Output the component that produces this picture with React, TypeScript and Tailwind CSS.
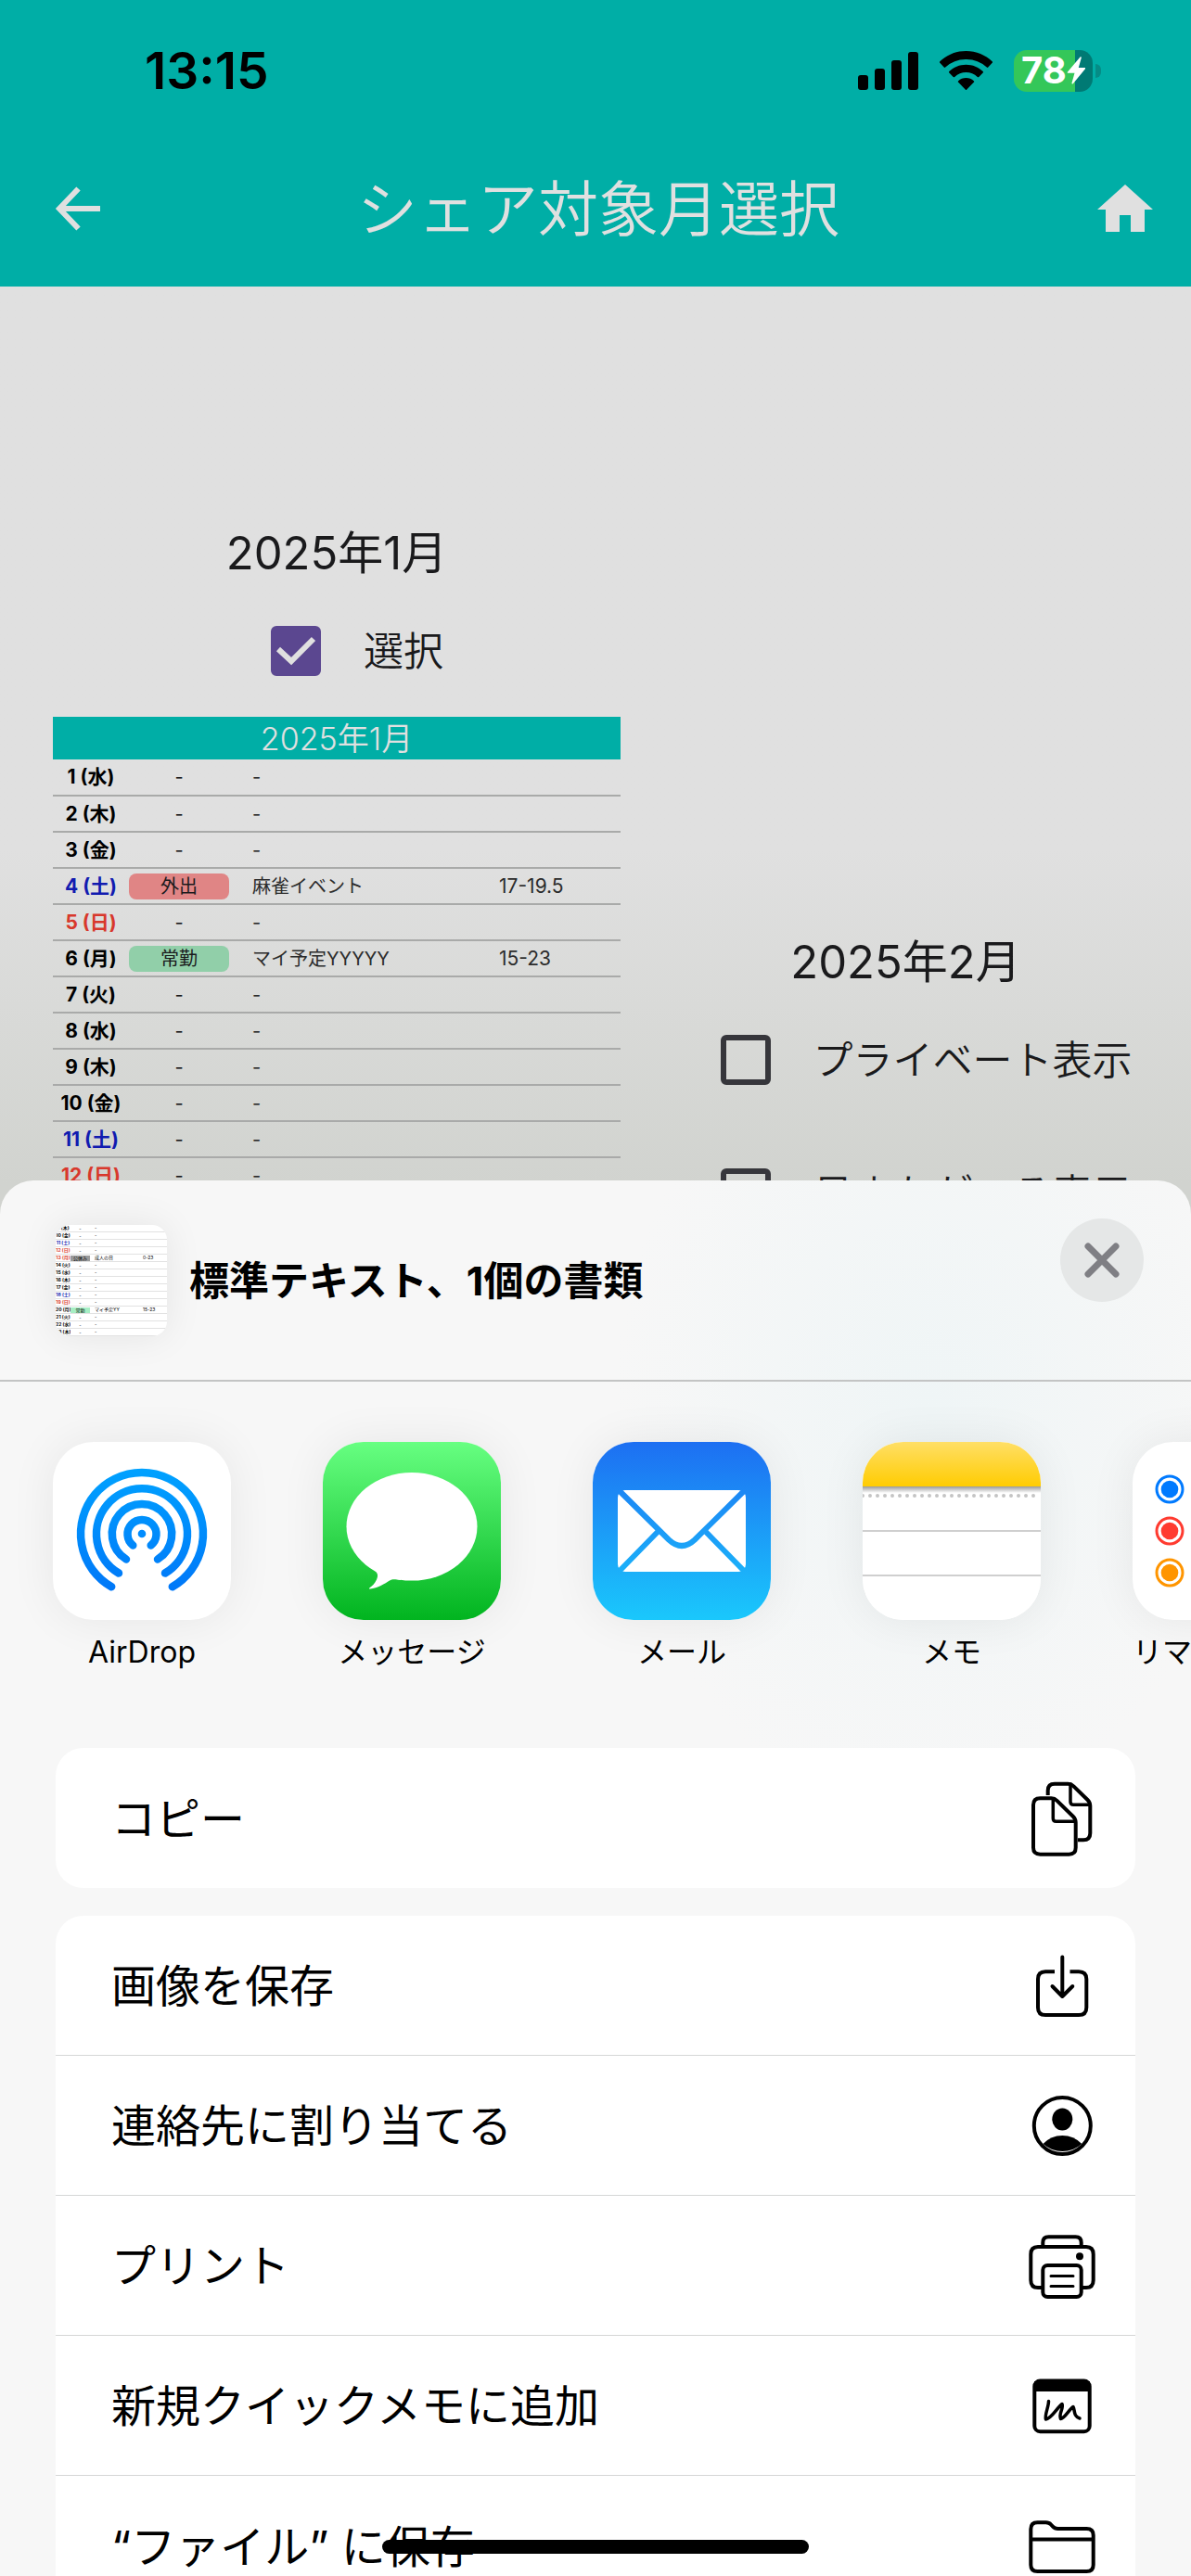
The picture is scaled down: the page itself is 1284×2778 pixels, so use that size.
import type { ReactNode } from "react";

type Day = {
  label: string;
  color?: string;
  tag?: string;
  tagColor?: string;
  text?: string;
  time?: string;
};

const BLUE = "text-[#111bb0]";
const RED = "text-[#d8382c]";

const days: Day[] = [
  { label: "1 (水)" },
  { label: "2 (木)" },
  { label: "3 (金)" },
  { label: "4 (土)", color: BLUE, tag: "外出", tagColor: "bg-[#e08585]", text: "麻雀イベント", time: "17-19.5" },
  { label: "5 (日)", color: RED },
  { label: "6 (月)", tag: "常勤", tagColor: "bg-[#91cfa9]", text: "マイ予定YYYYY", time: "15-23" },
  { label: "7 (火)" },
  { label: "8 (水)" },
  { label: "9 (木)" },
  { label: "10 (金)" },
  { label: "11 (土)", color: BLUE },
  { label: "12 (日)", color: RED },
];

const previewDays: Day[] = [
  { label: "9 (木)" },
  { label: "10 (金)" },
  { label: "11 (土)", color: BLUE },
  { label: "12 (日)", color: RED },
  { label: "13 (月)", color: RED, tag: "公休み", tagColor: "bg-[#9a9a9a]", text: "成人の日", time: "0-23" },
  { label: "14 (火)" },
  { label: "15 (水)" },
  { label: "16 (木)" },
  { label: "17 (金)" },
  { label: "18 (土)", color: BLUE },
  { label: "19 (日)", color: RED },
  { label: "20 (月)", tag: "常勤", tagColor: "bg-[#a6eec4]", text: "マイ予定YY", time: "15-23" },
  { label: "21 (火)" },
  { label: "22 (水)" },
  { label: "23 (木)" },
];

function StatusBar() {
  return (
    <div className="flex h-[152px] items-center justify-between pr-[97px] pl-[156px]">
      <time className="text-[55px] leading-none font-semibold">13:15</time>
      <div className="flex items-center">
        <svg className="h-[42px] w-[65px]" viewBox="0 0 65 42" aria-label="電波">
          <rect x="0" y="26" width="11" height="16" rx="3" />
          <rect x="18" y="19" width="11" height="23" rx="3" />
          <rect x="36" y="10" width="11" height="32" rx="3" />
          <rect x="54" y="1" width="11" height="41" rx="3" />
        </svg>
        <svg className="ml-[23px] h-[42px] w-[57px]" viewBox="0 0 57 42" aria-label="Wi-Fi">
          <path d="M28.500 0C39.500 0 49.500 4.300 56.700 11.300a1 1 0 0 1 0 1.500L52.300 17.600a1 1 0 0 1-1.500 0A32 32 0 0 0 28.500 9 32 32 0 0 0 6.200 17.600a1 1 0 0 1-1.500 0L.300 12.800a1 1 0 0 1 0-1.500C7.500 4.300 17.500 0 28.500 0Z" />
          <path d="M28.500 14.700c7 0 13.500 2.800 18.200 7.300a1 1 0 0 1 0 1.500l-4.400 4.400a1 1 0 0 1-1.500 0 18 18 0 0 0-24.600 0 1 1 0 0 1-1.500 0l-4.400-4.400a1 1 0 0 1 0-1.500c4.700-4.500 11.200-7.300 18.200-7.300Z" />
          <path d="M28.500 29c3.200 0 6.100 1.200 8.300 3.200a1 1 0 0 1 0 1.500l-7.500 7.700a1 1 0 0 1-1.600 0l-7.500-7.700a1 1 0 0 1 0-1.500c2.200-2 5.100-3.200 8.300-3.200Z" />
        </svg>
        <div className="ml-[23px] flex h-[45px] w-[85px] items-center rounded-[14px] bg-linear-to-r from-[#34c759] from-78% to-[#007a74] to-78% pl-2 text-white">
          <span className="text-[40px] leading-none font-bold">78</span>
          <svg className="h-[30px] w-5 shrink-0" viewBox="0 0 20 30" fill="currentColor" aria-label="充電中">
            <path d="M14.500.500 1 16.500c-.600.700-.200 1.300.500 1.300h7L5.500 28.500c-.300 1 .700 1.400 1.300.700L20 13.200c.500-.600.200-1.300-.600-1.300h-6.600L15.800 1.200c.300-1-.700-1.400-1.300-.7Z" />
          </svg>
        </div>
        <div className="ml-[3px] h-[15px] w-[6px] rounded-r-full bg-[#058c86]" />
      </div>
    </div>
  );
}

function CheckRow({ label, checked = false }: { label: string; checked?: boolean }) {
  return (
    <label className="flex items-center gap-[46px] pl-11 text-[43px] leading-[54px] font-[350] whitespace-nowrap">
      <span className="grid size-[54px] shrink-0">
        <input
          type="checkbox"
          defaultChecked={checked}
          className="peer col-start-1 row-start-1 size-[54px] appearance-none rounded-md border-6 border-[#36363b] checked:border-[#5b4790] checked:bg-[#5b4790]"
        />
        <svg
          className="pointer-events-none invisible col-start-1 row-start-1 size-[54px] peer-checked:visible"
          viewBox="0 0 54 54"
          fill="none"
          stroke="#e0e0e0"
          strokeWidth="6"
        >
          <path d="M8 25 22 38 46 14" />
        </svg>
      </span>
      {label}
    </label>
  );
}

function MonthTable() {
  return (
    <table className="w-full table-fixed border-collapse text-xl leading-[28px]">
      <caption className="h-[46px] bg-[#00aea6] text-[34px] leading-[48px] font-[350] text-[#e0e0e0]">2025年1月</caption>
      <colgroup>
        <col className="w-[82px]" />
        <col className="w-[108px]" />
        <col className="w-[291px]" />
        <col />
      </colgroup>
      <tbody>
        {days.map((d) => (
          <tr key={d.label} className="h-[39px] border-b-2 border-[#a9aaa9]">
            <th scope="row" className={`p-0 text-center text-[21px] font-bold whitespace-nowrap ${d.color ?? "text-black"}`}>
              {d.label}
            </th>
            <td className="p-0 text-center">
              {d.tag ? <div className={`rounded-lg ${d.tagColor}`}>{d.tag}</div> : "-"}
            </td>
            <td className="py-0 pr-0 pl-[25px] text-[#2c2c2c]">{d.text ?? "-"}</td>
            <td className="p-0 text-[21px] text-[#2c2c2c]">{d.time}</td>
          </tr>
        ))}
      </tbody>
    </table>
  );
}

function Preview() {
  return (
    <div className="size-[120px] shrink-0 overflow-hidden rounded-2xl bg-white shadow-[0_0_40px_rgba(0,0,0,0.08)]">
      {previewDays.map((d) => (
        <div key={d.label} className="flex h-2 items-center border-b border-[#e2e2e2] text-[5px] leading-[7px] whitespace-nowrap">
          <span className={`w-4 overflow-hidden text-center font-bold ${d.color ?? "text-black"}`}>{d.label}</span>
          <span className={`w-[21px] text-center leading-[6px] ${d.tagColor ?? ""}`}>{d.tag ?? "-"}</span>
          <span className="w-[57px] pl-[5px]">{d.text ?? "-"}</span>
          <span>{d.time}</span>
        </div>
      ))}
    </div>
  );
}

function AppIcon({ children }: { children: ReactNode }) {
  return (
    <svg className="size-48 rounded-[44px] bg-white shadow-[0_0_50px_rgba(0,0,0,0.07)]" viewBox="0 0 192 192" aria-hidden="true">
      {children}
    </svg>
  );
}

const airDropIcon = (
  <AppIcon>
    <defs>
      <linearGradient id="air" gradientUnits="userSpaceOnUse" x1="0" y1="28" x2="0" y2="162">
        <stop stopColor="#00a2ff" />
        <stop offset="1" stopColor="#0077f8" />
      </linearGradient>
    </defs>
    <g fill="none" stroke="url(#air)" strokeWidth="8.500" strokeLinecap="round">
      <path d="M63.200 156.200A66 66 0 1 1 128.800 156.200" />
      <path d="M71 141.500A49 49 0 1 1 121 141.500" />
      <path d="M79 126.500A32.200 32.200 0 1 1 113 126.500" />
      <path d="M86.300 111.500A15.500 15.500 0 1 1 105.700 111.500" />
    </g>
    <circle cx="96" cy="99" r="4.300" fill="#008cff" />
  </AppIcon>
);

const messagesIcon = (
  <AppIcon>
    <defs>
      <linearGradient id="msg" x1="0" y1="0" x2="0" y2="1">
        <stop stopColor="#67ff81" />
        <stop offset="1" stopColor="#01b41f" />
      </linearGradient>
    </defs>
    <rect width="192" height="192" fill="url(#msg)" />
    <ellipse cx="96" cy="91.300" rx="70.500" ry="58.300" fill="#fff" />
    <path d="M52 135C60 141 60 144 58 148.500 56 153 53 155.500 50.500 157.300 49.600 158 50 158.700 51 158.500 59 157.500 67 153 72 149.500 75 147.500 78 148 84 149L90 130Z" fill="#fff" />
  </AppIcon>
);

const mailIcon = (
  <AppIcon>
    <defs>
      <linearGradient id="mail" gradientUnits="userSpaceOnUse" x1="0" y1="0" x2="0" y2="192">
        <stop stopColor="#1d6ff2" />
        <stop offset="1" stopColor="#1ac8fc" />
      </linearGradient>
    </defs>
    <rect width="192" height="192" fill="url(#mail)" />
    <rect x="27" y="52" width="138" height="88" rx="8" fill="#fff" />
    <g fill="none" stroke="url(#mail)" strokeWidth="6">
      <path d="M28 52 82 105.500Q96 118.500 110 105.500L164 52" />
      <path d="M70 97 28 140M122 97 164 140" />
    </g>
  </AppIcon>
);

const notesIcon = (
  <AppIcon>
    <defs>
      <linearGradient id="memo" x1="0" y1="0" x2="0" y2="1">
        <stop stopColor="#ffdf66" />
        <stop offset="1" stopColor="#ffcc02" />
      </linearGradient>
      <linearGradient id="memoShade" x1="0" y1="0" x2="0" y2="1">
        <stop stopColor="#9a9a9a" />
        <stop offset="1" stopColor="#fff" />
      </linearGradient>
    </defs>
    <rect width="192" height="192" fill="#fff" />
    <rect width="192" height="48" fill="url(#memo)" />
    <rect y="48" width="192" height="7" fill="url(#memoShade)" />
    <path d="M0 58H192" stroke="#c4c4c4" strokeWidth="4" strokeLinecap="round" strokeDasharray="0 8" />
    <path d="M0 96H192M0 144H192" stroke="#cfcfcf" strokeWidth="2" />
  </AppIcon>
);

const remindersIcon = (
  <AppIcon>
    {[
      { y: 51, c: "#007aff" },
      { y: 96, c: "#ff3b30" },
      { y: 141, c: "#ff9500" },
    ].map((o) => (
      <g key={o.c}>
        <circle cx="40" cy={o.y} r="14" fill="none" stroke={o.c} strokeWidth="3" />
        <circle cx="40" cy={o.y} r="9.300" fill={o.c} />
        <path d={`M70 ${o.y}H192`} stroke="#d1d1d6" strokeWidth="2" />
      </g>
    ))}
  </AppIcon>
);

const apps = [
  { name: "AirDrop", icon: airDropIcon },
  { name: "メッセージ", icon: messagesIcon },
  { name: "メール", icon: mailIcon },
  { name: "メモ", icon: notesIcon },
  { name: "リマインダー", icon: remindersIcon },
];

function Glyph({ children }: { children: ReactNode }) {
  return (
    <svg
      className="h-[100px] w-20 shrink-0"
      viewBox="0 0 80 100"
      fill="none"
      stroke="currentColor"
      strokeWidth="4"
      strokeLinecap="round"
      strokeLinejoin="round"
      aria-hidden="true"
    >
      {children}
    </svg>
  );
}

const copyGlyph = (
  <Glyph>
    <path d="M24.700 25V20Q24.700 12.800 32 12.800H46.500Q50 12.800 52.500 15.300L67.500 30Q70.300 32.800 70.300 36.500V66Q70.300 73.300 63 73.300H57" strokeLinecap="butt" />
    <path d="M49 13V32Q49 35.300 52.300 35.300H69.500" strokeWidth="3.500" />
    <path d="M16.500 28.300H28.500Q32 28.300 34.500 30.800L52 48Q54.700 50.700 54.700 54.500V81.500Q54.700 88.700 47.500 88.700H16.500Q9 88.700 9 81.500V35.500Q9 28.300 16.500 28.300Z" />
    <path d="M30.300 29V50Q30.300 53.300 33.600 53.300H54" strokeWidth="3.500" />
  </Glyph>
);

const saveGlyph = (
  <Glyph>
    <path d="M32 35.300H22Q14 35.300 14 43.300V74Q14 82 22 82H58Q66.300 82 66.300 74V43.300Q66.300 35.300 58 35.300H48.500" strokeLinecap="butt" />
    <path d="M40.300 19.500V62M29.500 51 40.300 62 51.300 51" />
  </Glyph>
);

const personGlyph = (
  <Glyph>
    <circle cx="40.300" cy="50.500" r="30.500" />
    <g fill="currentColor" stroke="none">
      <ellipse cx="40.300" cy="43.500" rx="11" ry="12" />
      <path d="M19.500 70Q28 61 40.300 61T61.300 70A31 31 0 0 1 19.500 70Z" />
    </g>
  </Glyph>
);

const printGlyph = (
  <Glyph>
    <path d="M19 74H14Q6.300 74 6.300 66V38Q6.300 30 14 30H66Q73.700 30 73.700 38V66Q73.700 74 66 74H61" />
    <path d="M19.300 30V25.500Q19.300 19.300 25.500 19.300H54.500Q60.700 19.300 60.700 25.500V30" />
    <rect x="19.300" y="50" width="41.400" height="34" rx="5" />
    <path d="M28 61.500H52M28 72.500H52" strokeWidth="3" />
    <circle cx="59" cy="40.300" r="4" fill="currentColor" stroke="none" />
  </Glyph>
);

const noteGlyph = (
  <Glyph>
    <rect x="10.300" y="23.600" width="59.400" height="54.600" rx="6" />
    <path d="M10 24H70V35H10Z" fill="currentColor" stroke="none" />
    <path d="M25.500 45.500C25.500 52 21 60 22.500 65 29 64 35 52 40 48.500 42 53 36 59 38.500 64.500 43.500 63.500 47 55 52 51.500 54 55 52 62 59 64" strokeWidth="3.500" />
  </Glyph>
);

const folderGlyph = (
  <Glyph>
    <path d="M13.500 24.300H22.500Q26 24.300 28 26.500L30 28.700Q32 31 35.500 31H66.500Q73.700 31 73.700 38V70Q73.700 77 66.500 77H13.500Q6.300 77 6.300 70V31.500Q6.300 24.300 13.500 24.300ZM6.300 42.500H73.700" />
  </Glyph>
);

const actions = [
  { label: "画像を保存", icon: saveGlyph },
  { label: "連絡先に割り当てる", icon: personGlyph },
  { label: "プリント", icon: printGlyph },
  { label: "新規クイックメモに追加", icon: noteGlyph },
  { label: "“ファイル” に保存", icon: folderGlyph },
];

function ActionButton({ label, icon }: { label: string; icon: ReactNode }) {
  return (
    <button type="button" className="flex h-[151px] w-full items-center justify-between pr-[39px] pl-[60px] text-left text-5xl">
      <span className="pt-0.5">{label}</span>
      {icon}
    </button>
  );
}

function ShareSheet() {
  return (
    <section aria-label="共有" className="flex-1 rounded-t-[36px] bg-[#f7f7f7] bg-[radial-gradient(ellipse_at_78%_16%,#eff5f6_0%,transparent_24%)] text-black">
      <div className="flex h-[217px] items-start border-b-2 border-[#c3c4c4] pr-[51px] pl-[60px]">
        <div className="mt-12 flex min-w-0 flex-1 items-center gap-6">
          <Preview />
          <h2 className="text-[43px] leading-none font-bold">標準テキスト、1個の書類</h2>
        </div>
        <button type="button" aria-label="閉じる" className="mt-[41px] grid size-[90px] place-items-center rounded-full bg-[#e5e7e7] text-[#7f7f84]">
          <svg className="size-11" viewBox="0 0 44 44" fill="none" stroke="currentColor" strokeWidth="7" strokeLinecap="round" aria-hidden="true">
            <path d="M7 7 37 37M37 7 7 37" />
          </svg>
        </button>
      </div>
      <ul className="flex gap-[99px] overflow-hidden pt-[65px] pb-[84px] pl-[57px]">
        {apps.map((a) => (
          <li key={a.name} className="w-48 shrink-0">
            <button type="button" className="flex w-full flex-col items-center gap-4 text-[32px] leading-[38px] whitespace-nowrap">
              {a.icon}
              <span>{a.name}</span>
            </button>
          </li>
        ))}
      </ul>
      <div className="mx-[60px] rounded-[30px] bg-white">
        <ActionButton label="コピー" icon={copyGlyph} />
      </div>
      <div className="mx-[60px] mt-[30px] divide-y divide-[#d5d6d6] rounded-t-[30px] bg-white">
        {actions.map((a) => (
          <ActionButton key={a.label} label={a.label} icon={a.icon} />
        ))}
      </div>
    </section>
  );
}

export default function App() {
  return (
    <div className="flex h-screen flex-col overflow-hidden bg-linear-to-b from-[#e0e0e0] from-33% to-[#d1d3cf] to-46% font-[Inter,'Noto_Sans_CJK_JP',sans-serif] text-[#1a1a1c]" lang="ja">
      <header className="shrink-0 bg-[#00aea6] pb-[11px]">
        <div className="text-black">
          <StatusBar />
        </div>
        <nav className="flex h-[146px] items-center pr-5 pl-10 text-[#e0e0e0]">
          <button type="button" aria-label="戻る">
            <svg className="size-[88px]" viewBox="0 0 88 88" fill="none" stroke="currentColor" strokeWidth="6" aria-hidden="true">
              <path d="M68 44H25M44.500 22.500 24 44 44.500 65.500" />
            </svg>
          </button>
          <h1 className="flex-1 text-center text-[65px] leading-none font-[350]">シェア対象月選択</h1>
          <button type="button" aria-label="ホーム" className="grid w-[102px] place-items-center">
            <svg className="h-[52px] w-[60px]" viewBox="0 0 60 52" fill="currentColor" aria-hidden="true">
              <path d="M30 0 60 27H51V51H36V33H24V51H9V27H0Z" />
            </svg>
          </button>
        </nav>
      </header>
      <main className="flex h-[964px] shrink-0 overflow-hidden pl-[57px]">
        <section className="flex w-[612px] shrink-0 flex-col items-center pt-[261px]">
          <h2 className="text-[49px] leading-[54px]">2025年1月</h2>
          <div className="mt-[51px] mb-[44px]">
            <CheckRow label="選択" checked />
          </div>
          <MonthTable />
        </section>
        <section className="flex flex-1 flex-col items-center pt-[702px]">
          <h2 className="text-[49px] leading-[54px]">2025年2月</h2>
          <div className="mt-[51px] flex flex-col items-center gap-[90px]">
            <CheckRow label="プライベート表示" />
            <CheckRow label="日またがつる表示" />
          </div>
        </section>
      </main>
      <ShareSheet />
      <div className="fixed bottom-6 left-1/2 h-[15px] w-[460px] -translate-x-1/2 rounded-full bg-black" />
    </div>
  );
}
